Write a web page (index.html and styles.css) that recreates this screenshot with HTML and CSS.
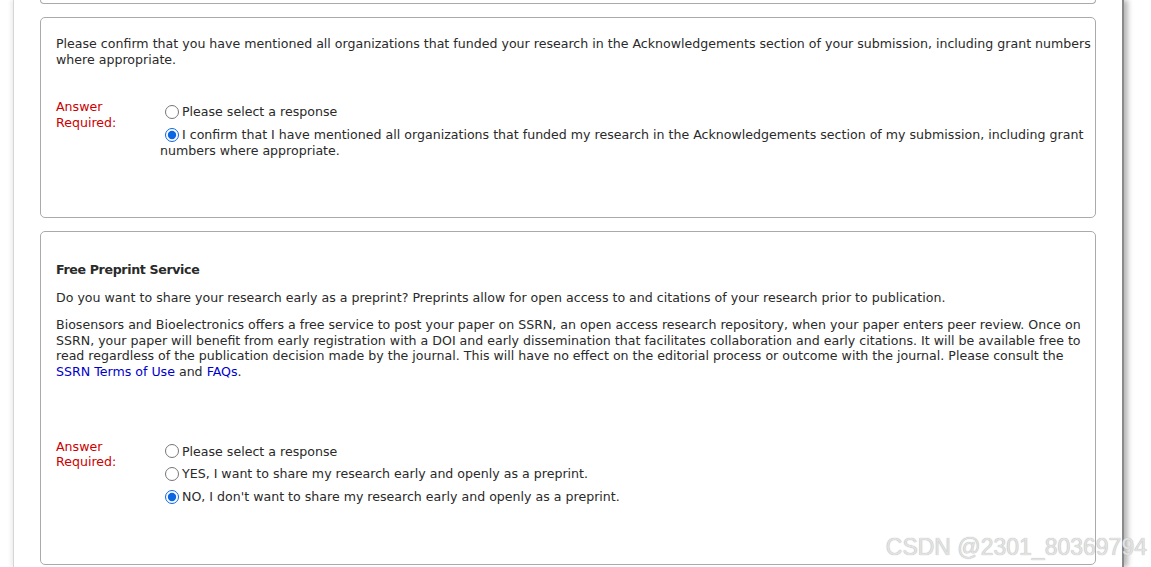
FILE: index.html
```html
<!DOCTYPE html>
<html>
<head>
<meta charset="utf-8">
<link rel="stylesheet" href="styles.css">
</head>
<body>
<div class="page">
  <div class="box box-cut"></div>

  <div class="box box-funding">
    <p class="question">Please confirm that you have mentioned all organizations that funded your research in the Acknowledgements section of your submission, including grant numbers where appropriate.</p>
    <div class="answer answer-funding">
      <div class="answer-label">Answer Required:</div>
      <div class="options">
        <div class="option"><input type="radio" name="q1">Please select a response</div>
        <div class="option"><input type="radio" name="q1" checked>I confirm that I have mentioned all organizations that funded my research in the Acknowledgements section of my submission, including grant numbers where appropriate.</div>
      </div>
    </div>
  </div>

  <div class="box box-preprint">
    <h3 class="title">Free Preprint Service</h3>
    <p class="intro">Do you want to share your research early as a preprint? Preprints allow for open access to and citations of your research prior to publication.</p>
    <p class="desc">Biosensors and Bioelectronics offers a free service to post your paper on SSRN, an open access research repository, when your paper enters peer review. Once on SSRN, your paper will benefit from early registration with a DOI and early dissemination that facilitates collaboration and early citations. It will be available free to read regardless of the publication decision made by the journal. This will have no effect on the editorial process or outcome with the journal. Please consult the <a href="#">SSRN Terms of Use</a> and <a href="#">FAQs</a>.</p>
    <div class="answer answer-preprint">
      <div class="answer-label">Answer Required:</div>
      <div class="options">
        <div class="option"><input type="radio" name="q2">Please select a response</div>
        <div class="option"><input type="radio" name="q2">YES, I want to share my research early and openly as a preprint.</div>
        <div class="option"><input type="radio" name="q2" checked>NO, I don't want to share my research early and openly as a preprint.</div>
      </div>
    </div>
  </div>
</div>
<div class="watermark">CSDN @2301_80369794</div>
</body>
</html>
```

FILE: styles.css
```css
html, body {
  margin: 0;
  padding: 0;
  background: #fff;
  height: 567px;
  overflow: hidden;
}
body {
  font-family: "DejaVu Sans", Verdana, sans-serif;
  font-size: 12.6px;
  line-height: 15.7px;
  color: #2a2a2a;
}
.page {
  margin-left: 13px;
  width: 1111px;
  height: 567px;
  overflow: hidden;
  border-left: 1px solid #d6d6d6;
  border-right: 2px solid #8a8a8a;
  box-shadow: 4px 0 5px rgba(0,0,0,0.28), -3px 0 3px rgba(0,0,0,0.05);
  padding: 0 26px 0 26px;
  box-sizing: border-box;
  background: #fff;
}
.box {
  box-sizing: border-box;
  border: 1px solid #aaa;
  border-radius: 5px;
  background: #fff;
  padding: 0 4px 0 15px;
}
.box-cut {
  height: 4px;
  border-top: none;
  border-radius: 0 0 5px 5px;
  margin-bottom: 13px;
}
.box-funding {
  height: 201px;
  padding-top: 18px;
  margin-bottom: 13px;
}
.box-preprint {
  height: 334px;
  padding-top: 30px;
}
p { margin: 0; }
.question { margin-bottom: 32px; }
.title {
  margin: 0 0 12px;
  font-size: 12.6px;
  line-height: 15.7px;
  font-weight: bold;
  letter-spacing: -0.35px;
}
.intro { margin-bottom: 11.5px; }
.desc { margin-bottom: 59px; }
a { color: #0000cc; text-decoration: none; }
.answer {
  display: flex;
}
.answer-label {
  width: 104px;
  flex: none;
  color: #cc0000;
}
.options { flex: 1; padding-top: 5px; }
.option { margin-bottom: 7px; }
.option input {
  width: 14px;
  height: 14px;
  margin: 0 3px 0 5px;
  vertical-align: -2.5px;
  accent-color: #0b66e4;
}
.watermark {
  position: absolute;
  right: 4px;
  top: 533px;
  font-family: "Liberation Sans", Arial, sans-serif;
  font-size: 23px;
  line-height: 28px;
  color: #e2e2e2;
  text-shadow: 0 0 1px #a0a0a0;
}
```
